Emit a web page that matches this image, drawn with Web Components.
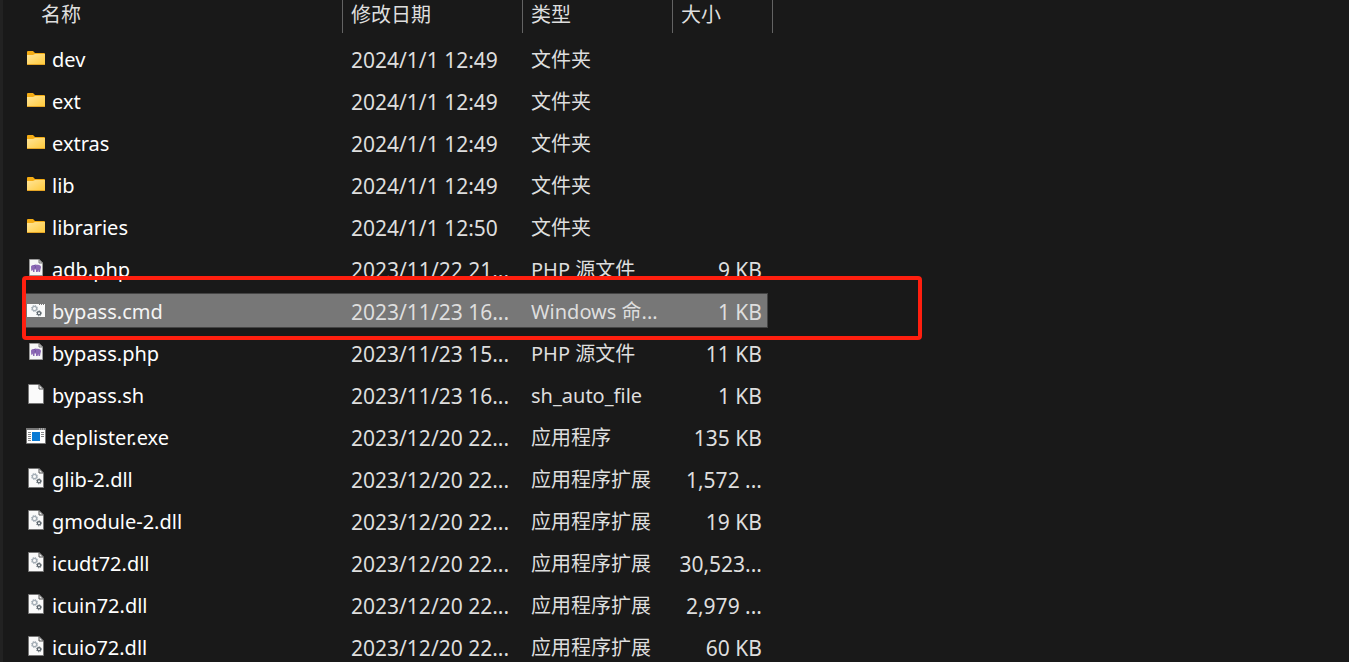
<!DOCTYPE html>
<html lang="zh-CN">
<head>
<meta charset="utf-8">
<title>文件列表</title>
<style>
body { margin: 0; background: #191919; }
</style>
</head>
<body>
<file-list></file-list>
<script>
const gears = (x, y) => `
  <g transform="translate(${x} ${y})" fill="none">
    <circle cx="3.5" cy="3.5" r="2.1" stroke="#a3adb5" stroke-width="1.2"/>
    <circle cx="3.5" cy="3.5" r="3.1" stroke="#a3adb5" stroke-width="1" stroke-dasharray="1.3 1.13"/>
    <circle cx="8" cy="8.3" r="1.6" stroke="#59636a" stroke-width="1.2"/>
    <circle cx="8" cy="8.3" r="2.5" stroke="#59636a" stroke-width=".9" stroke-dasharray="1 .96"/>
  </g>`;
const page = inner => `
  <path d="M2.5.5H13L17.5 5v14.5h-15z" fill="#fafafa" stroke="#777"/>
  <path d="M13 .5V5h4.5z" fill="#eee" stroke="#555"/>${inner}`;
const drawings = {
  folder: `
    <defs><linearGradient id="g" x1="0" y1="0" x2="1" y2="1">
      <stop offset="0" stop-color="#ffe59a"/><stop offset="1" stop-color="#ffc938"/></linearGradient></defs>
    <path d="M1 4q0-1 1-1h5l2 2h9q1 0 1 1v10H1z" fill="#f4ac14"/>
    <path d="M1 7h6l2-1h10v10q0 1-1 1H2q-1 0-1-1z" fill="url(#g)"/>
    <path d="M1 16.5h18" stroke="#e5a526"/>`,
  php: `
    <path d="M3.5 1.5H13L16.5 5v12.5h-13z" fill="#f6f6f6" stroke="#999"/>
    <path d="M13 1.5V5h3.5z" fill="#ddd" stroke="#777"/>
    <path d="M5 8.5Q5.5 6.5 8 7q1-.8 2.5-.3Q15 6.2 15 9.5l-.5 1.5-.5 3h-1.5v-2l-1 2H10v-2.5H8.5V14H7v-2.5L6 13l-.8-.5z" fill="#8b68b4"/>
    <path d="M8.3 7.3q2 1 .7 3" fill="none" stroke="#66459a" stroke-width=".8"/>`,
  cmd: `
    <path d="M1 4h18v13H1z" fill="#fafafa"/>
    <path d="M13 4.5h1m1 0h1m1 0h1" stroke="#777"/>${gears(5, 5)}`,
  file: page(''),
  dll: page(gears(5, 5)),
  exe: `
    <path d="M.5 2.5h19v15H.5z" fill="#fff" stroke="#777"/>
    <path d="M0 3h20" stroke="#777" stroke-width="2"/>
    <path d="M13 3h1m1 0h1m1 0h1" stroke="#ddd"/>
    <path d="M6 6h8v9H6z" fill="#0b7bd4"/>
    <path d="M2 6.5h3m-3 2h3m-3 2h3m-3 2h3m-3 2h3m10-8h3m-3 2h3m-3 2h3" stroke="#888"/>`
};

class FileIcon extends HTMLElement {
  connectedCallback() {
    this.attachShadow({ mode: 'open' }).innerHTML = `
      <style>
        :host { display: block; flex: none; width: 20px; height: 20px; }
        svg { display: block; }
      </style>
      <svg width="20" height="20" viewBox="0 0 20 20" aria-hidden="true">${drawings[this.getAttribute('kind')]}</svg>`;
  }
}
customElements.define('file-icon', FileIcon);

class HighlightFrame extends HTMLElement {
  connectedCallback() {
    this.attachShadow({ mode: 'open' }).innerHTML = `
      <style>
        :host { display: block; box-sizing: border-box; border: 4px solid #ff1f0f; border-radius: 4px; pointer-events: none; }
      </style>`;
  }
}
customElements.define('highlight-frame', HighlightFrame);

const files = [
  ['folder', 'dev', '2024/1/1 12:49', '文件夹', ''],
  ['folder', 'ext', '2024/1/1 12:49', '文件夹', ''],
  ['folder', 'extras', '2024/1/1 12:49', '文件夹', ''],
  ['folder', 'lib', '2024/1/1 12:49', '文件夹', ''],
  ['folder', 'libraries', '2024/1/1 12:50', '文件夹', ''],
  ['php', 'adb.php', '2023/11/22 21...', 'PHP 源文件', '9 KB'],
  ['cmd', 'bypass.cmd', '2023/11/23 16...', 'Windows 命...', '1 KB'],
  ['php', 'bypass.php', '2023/11/23 15...', 'PHP 源文件', '11 KB'],
  ['file', 'bypass.sh', '2023/11/23 16...', 'sh_auto_file', '1 KB'],
  ['exe', 'deplister.exe', '2023/12/20 22...', '应用程序', '135 KB'],
  ['dll', 'glib-2.dll', '2023/12/20 22...', '应用程序扩展', '1,572 ...'],
  ['dll', 'gmodule-2.dll', '2023/12/20 22...', '应用程序扩展', '19 KB'],
  ['dll', 'icudt72.dll', '2023/12/20 22...', '应用程序扩展', '30,523...'],
  ['dll', 'icuin72.dll', '2023/12/20 22...', '应用程序扩展', '2,979 ...'],
  ['dll', 'icuio72.dll', '2023/12/20 22...', '应用程序扩展', '60 KB']
];

class FileList extends HTMLElement {
  connectedCallback() {
    const selected = 'bypass.cmd';
    const rows = files.map(([kind, name, date, type, size]) => `
      <tr${name === selected ? ' class="selected" aria-selected="true"' : ''}>
        <td class="name"><div><file-icon kind="${kind}"></file-icon><span>${name}</span></div>${name === selected ? '<highlight-frame></highlight-frame>' : ''}</td>
        <td class="date">${date}</td><td class="type">${type}</td><td class="size">${size}</td>
      </tr>`).join('');
    this.attachShadow({ mode: 'open' }).innerHTML = `
      <style>
        :host {
          display: block; box-sizing: border-box; height: 100vh; overflow: hidden;
          border-left: 3px solid #222; padding-left: 19px;
          background: #191919; color: #dedede;
          font: 20px/26px "Noto Sans", "Noto Sans CJK SC", sans-serif;
        }
        table { table-layout: fixed; width: 746px; border-collapse: separate; border-spacing: 0; }
        col.c-name { width: 321px; }
        col.c-date { width: 180px; }
        col.c-type { width: 150px; }
        th {
          box-sizing: border-box; height: 33px; padding: 0 8px 4px; text-align: left; font-weight: 400;
          border-right: 1px solid #636363;
        }
        th:first-child { padding-left: 19px; }
        th:last-child { position: relative; border: 0; }
        th:last-child::after { content: ""; position: absolute; right: -5px; top: 0; bottom: 0; width: 1px; background: #636363; }
        thead::after { content: ""; display: block; height: 5px; }
        td {
          box-sizing: border-box; height: 42px; padding: 2px 8px 0; white-space: nowrap;
          border: solid transparent; border-width: 3px 0 4px; background-clip: padding-box;
        }
        td.name { position: relative; padding: 2px 4px 0; color: #fff; }
        td.name div { display: flex; align-items: center; gap: 6px; }
        file-icon { margin-bottom: 4px; }
        td.date, td.size { font-size: 21px; }
        td.size { padding: 2px 6px 0; text-align: right; }
        .selected td { background-color: #777; box-shadow: inset 0 1px #444, inset 0 -1px #444; }
        .selected td.size { box-shadow: inset -1px 1px #444, inset 0 -1px #444; }
        .selected td.name { color: #f4f4f4; }
        highlight-frame { position: absolute; left: 0; top: -17px; width: 900px; height: 64px; }
      </style>
      <table>
        <colgroup><col class="c-name"><col class="c-date"><col class="c-type"><col></colgroup>
        <thead><tr><th scope="col">名称</th><th scope="col">修改日期</th><th scope="col">类型</th><th scope="col">大小</th></tr></thead>
        <tbody>${rows}</tbody>
      </table>`;
  }
}
customElements.define('file-list', FileList);
</script>
</body>
</html>
